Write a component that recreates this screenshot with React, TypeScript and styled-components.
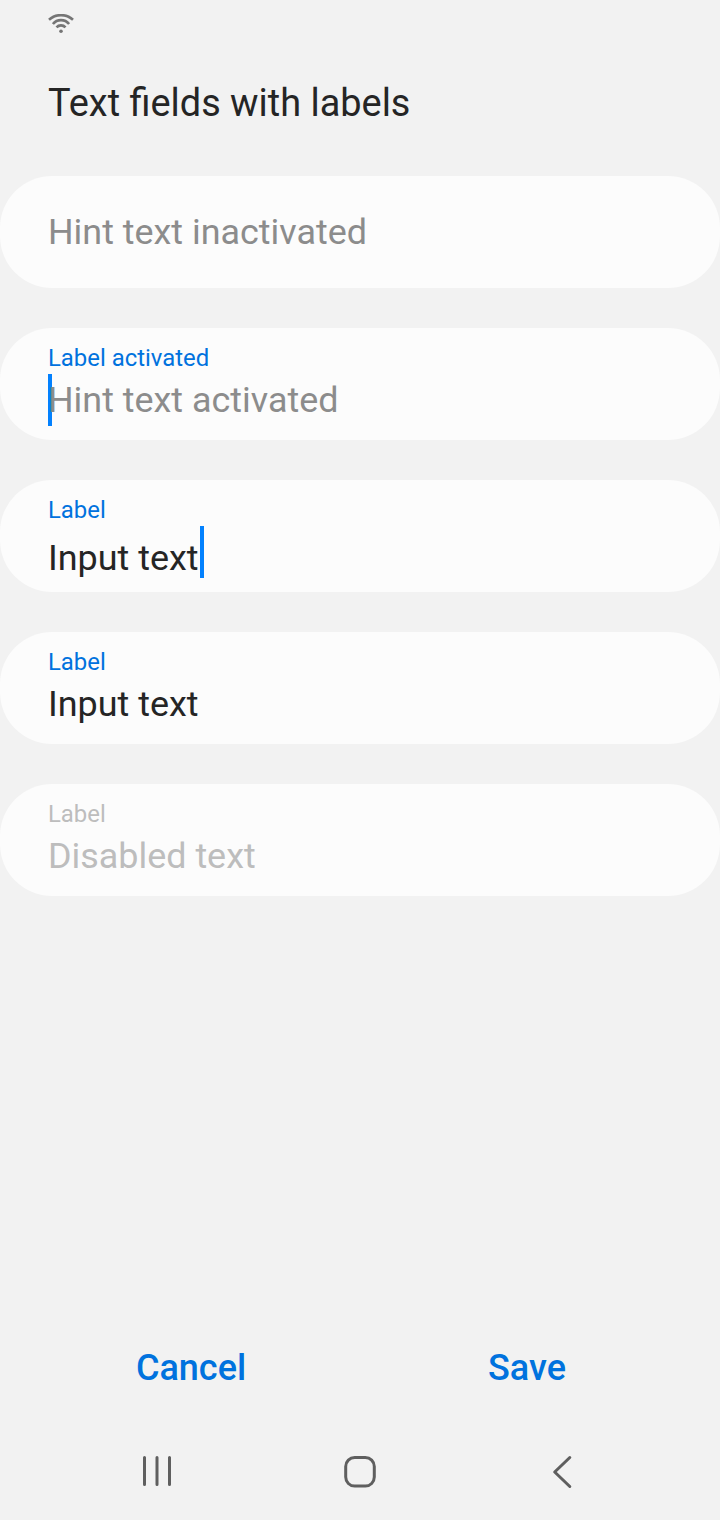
import React from "react";
import styled, { createGlobalStyle } from "styled-components";

const GlobalStyle = createGlobalStyle`
  *, *::before, *::after { box-sizing: border-box; }
  body { margin: 0; background: #f2f2f2; font-family: Roboto, sans-serif; color: #252525; }
`;

const Screen = styled.div`
  display: flex;
  flex-direction: column;
  width: 720px;
  height: 1520px;
  background: #f2f2f2;
  overflow: hidden;
`;

const StatusBar = styled.header`
  display: flex;
  align-items: center;
  height: 48px;
  padding: 0 48px;
  flex: none;
`;

const Title = styled.h1`
  margin: 0;
  height: 128px;
  padding: 33px 48px 0;
  font-size: 37.9px;
  line-height: 44px;
  font-weight: 400;
  white-space: nowrap;
  flex: none;
`;

const Fields = styled.main`
  display: flex;
  flex-direction: column;
  gap: 40px;
  flex: 1;
`;

const Field = styled.div<{ $top: number }>`
  display: flex;
  flex-direction: column;
  height: 112px;
  padding: ${(p) => p.$top}px 48px 0;
  border-radius: 52px;
  background: #fcfcfc;
`;

const Label = styled.span<{ $color?: string }>`
  font-size: 23.9px;
  line-height: 28px;
  color: ${(p) => p.$color ?? "#0072de"};
`;

const Value = styled.div<{ $color?: string; $gap?: number }>`
  display: flex;
  margin-top: ${(p) => p.$gap ?? 0}px;
  font-size: 35.9px;
  line-height: 42px;
  color: ${(p) => p.$color ?? "#252525"};
  white-space: nowrap;
`;

const Caret = styled.i<{ $left?: number; $right?: number; $top: number }>`
  width: 4px;
  height: 52px;
  margin: ${(p) => p.$top}px ${(p) => p.$right ?? 0}px 0 ${(p) => p.$left ?? 0}px;
  background: #0381fe;
  flex: none;
`;

const Actions = styled.div`
  display: grid;
  grid-template-columns: 1fr 1fr;
  height: 112px;
  padding: 0 25px 0 23px;
  flex: none;
`;

const Action = styled.button`
  border: 0;
  padding: 0;
  background: none;
  font: 500 36px/42px Roboto, sans-serif;
  color: #0072de;
`;

const NavBar = styled.nav`
  display: flex;
  justify-content: space-between;
  align-items: center;
  height: 96px;
  padding: 0 136px;
  flex: none;
`;

const NavIcon = styled.svg.attrs({ width: 40, height: 40, viewBox: "0 0 40 40" })`
  display: block;
  fill: none;
  stroke: #5f5f5f;
  stroke-width: 3;
  stroke-linecap: round;
  stroke-linejoin: round;
`;

export default function App() {
  return (
    <>
      <GlobalStyle />
      <Screen>
        <StatusBar>
          <svg width="26" height="20" viewBox="0 0 26 20" fill="none" stroke="#757575" strokeWidth="2.6">
            <path d="M1 5.800A17.700 17.700 0 0 1 25 5.800M4.900 10A10.400 10.400 0 0 1 21.100 10M8.500 13.400A6 6 0 0 1 17.500 13.400" />
            <circle cx="13" cy="17.300" r="1.800" fill="#757575" stroke="none" />
          </svg>
        </StatusBar>
        <Title>Text fields with labels</Title>
        <Fields>
          <Field $top={35}>
            <Value $color="#8c8c8c">Hint text inactivated</Value>
          </Field>
          <Field $top={16}>
            <Label>Label activated</Label>
            <Value $color="#8c8c8c" $gap={7}>
              <Caret $right={-4} $top={-5} />
              Hint text activated
            </Value>
          </Field>
          <Field $top={16}>
            <Label>Label</Label>
            <Value $gap={13}>
              Input text
              <Caret $left={1} $top={-11} />
            </Value>
          </Field>
          <Field $top={16}>
            <Label>Label</Label>
            <Value $gap={7}>Input text</Value>
          </Field>
          <Field $top={16}>
            <Label $color="#bdbdbd">Label</Label>
            <Value $color="#bdbdbd" $gap={7}>Disabled text</Value>
          </Field>
        </Fields>
        <Actions>
          <Action>Cancel</Action>
          <Action>Save</Action>
        </Actions>
        <NavBar>
          <NavIcon>
            <path d="M8.500 5.500v27M21 5.500v27M33.500 5.500v27" />
          </NavIcon>
          <NavIcon>
            <rect x="5.700" y="5.500" width="28.600" height="28.600" rx="9" />
          </NavIcon>
          <NavIcon>
            <path d="M25.800 5.500 10.700 20l15.100 14.500" />
          </NavIcon>
        </NavBar>
      </Screen>
    </>
  );
}
